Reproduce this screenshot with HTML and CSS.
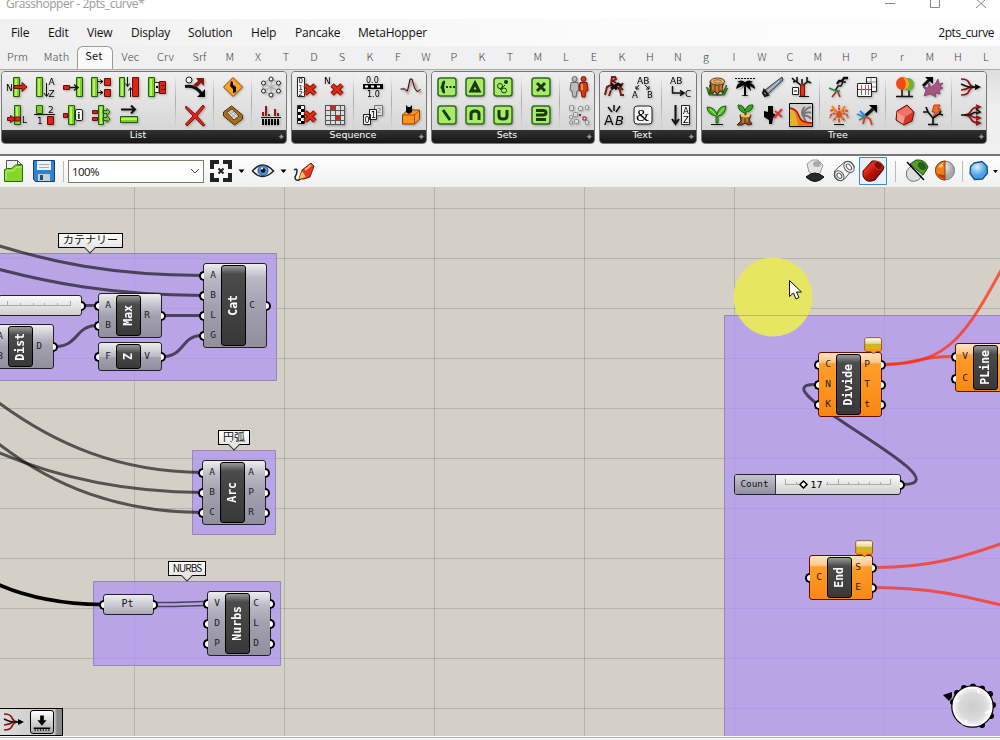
FILE: index.html
```html
<!DOCTYPE html>
<html lang="en">
<head>
<meta charset="utf-8">
<title>Grasshopper - 2pts_curve*</title>
<link rel="stylesheet" href="styles.css">
</head>
<body>
<div class="app">
<header class="titlebar">
  <span class="title">Grasshopper - 2pts_curve*</span>
  <svg class="winbtns" width="110" height="19" viewBox="885 0 110 19"><path d="M885 3.500h10M930.500-2V7.500h9V-2M976-1l10 9M986-1l-10 9"/></svg>
</header>
<nav class="menu"><span>File</span><span>Edit</span><span>View</span><span>Display</span><span>Solution</span><span>Help</span><span>Pancake</span><span>MetaHopper</span><span class="doc">2pts_curve</span></nav>
<nav class="tabs"><span>Prm</span><span>Math</span><span class="active">Set</span><span>Vec</span><span>Crv</span><span>Srf</span><span>M</span><span>X</span><span>T</span><span>D</span><span>S</span><span>K</span><span>F</span><span>W</span><span>P</span><span>K</span><span>T</span><span>M</span><span>L</span><span>E</span><span>K</span><span>H</span><span>N</span><span>g</span><span>I</span><span>W</span><span>C</span><span>M</span><span>H</span><span>P</span><span>r</span><span>M</span><span>H</span><span>L</span></nav>

<section class="ribbon">
  <div class="panel">
    <div class="groups">
      <div class="icons six">
        <svg viewBox="0 0 24 24"><path class="g" d="M8.500 2.500h6v19h-6z"/><path class="gh" d="M10 4h2v17h-2z"/><text x="1" y="16" font-size="9">N</text><path class="r" d="M9 10.500h8v-3l5 4.500-5 4.500v-3H9z"/></svg>
        <svg viewBox="0 0 24 24"><path class="g" d="M3.500 2.500h6v19h-6z"/><path class="gh" d="M5 4h2v17H5z"/><path class="k" d="M13.500 8v13M11 18l2.500 3.500L16 18"/><text x="15.500" y="10" font-size="9">A</text><text x="15.500" y="22" font-size="9">Z</text></svg>
        <svg viewBox="0 0 24 24"><path class="g" d="M15.500 2.500h6v19h-6z"/><path class="gh" d="M17 4h2v17h-2z"/><path class="r" d="M2.500 10.500h6v4h-6z"/><path class="k" stroke-width="1.500" d="M9 12.500h7M13 9.500l4 3-4 3"/></svg>
        <svg viewBox="0 0 24 24"><path class="g" d="M2.500 2.500h6v19h-6z"/><path class="gh" d="M4 4h2v17H4z"/><path class="r" d="M15.500 3.500h6v7h-6zM15.500 14.500h6v7h-6z"/><path class="k" d="M8 6.500h6M11 4.500l3 2-3 2M8 17.500h6M11 15.500l3 2-3 2"/></svg>
        <svg viewBox="0 0 24 24"><path class="g" d="M2.500 2.500h5v19h-5z"/><path class="gh" d="M4 4h2v17H4z"/><path class="r" d="M15.500 2.500h6v19h-6z"/><path class="k" d="M10.500 2v9M8.500 8.500l2 3 2-3M13.500 22v-9M11.500 15.500l2-3 2 3"/></svg>
        <svg viewBox="0 0 24 24"><path class="w" d="M9 7.500h5v10H9z"/><path class="g" d="M3.500 2.500h6v19h-6z"/><path class="gh" d="M5 4h2v17H5z"/><path class="r" d="M14.500 6.500h6v12h-6z"/><path d="M16 10h4v1h-4zM16 14h4v1h-4z" fill="#6d0c08"/><circle cx="12" cy="12" r="1.200"/></svg>
        <svg viewBox="0 0 24 24"><path class="g" d="M9.500 2.500h6v19h-6z"/><path class="gh" d="M11 4h2v10h-2z"/><path class="r" d="M2.500 14.500h3v-2l5 3.500-5 3.500v-2h-3zM9.500 14h6v4h-6z"/><text x="17" y="20" font-size="9">L</text></svg>
        <svg viewBox="0 0 24 24"><path class="g" d="M3.500 2.500h6v8h-6z"/><path class="r" d="M14.500 13.500h6v8h-6z"/><path class="k" d="M1 11.500h21"/><text x="15" y="10" font-size="9">2</text><text x="4" y="21" font-size="9">1</text></svg>
        <svg viewBox="0 0 24 24"><path class="r" d="M2.500 10.500h4v4h-4z"/><path class="g" d="M7.500 2.500h6v19h-6z"/><path class="gh" d="M9 4h2v17H9z"/><rect class="w" x="14.500" y="6.500" width="7" height="11" rx="1.500"/><text x="16.500" y="15.500" font-size="8" font-weight="bold">i</text></svg>
        <svg viewBox="0 0 24 24"><path class="g" d="M9.500 2.500h5v19h-5zM14 7.500h4v-2l3 3.500-3 3.500v-2h-4zM14 14.500h4v-2l3 3.500-3 3.500v-2h-4z"/><path class="r" d="M3.500 7.500h5v3h-5zM3.500 14.500h5v3h-5z"/><path class="gh" d="M11 4h2v17h-2z"/></svg>
        <svg viewBox="0 0 24 24"><path class="k2" d="M4 6.500h13M14 2.500l4 4-4 4"/><path class="g" d="M3.500 13.500h17v6h-17z"/><path class="gh" d="M4 15h16v2H4z"/></svg>
      </div>
      <div class="icons">
        <svg viewBox="0 0 24 24"><path class="k3" d="M2 11.500q11-2 17 8"/><path d="M14 22h8v-8z"/><path d="M10 10l5-4-2-3h8v8l-3-3-4 4z" fill="#8d1512"/><circle class="w" cx="6" cy="5" r="3"/></svg>
        <svg viewBox="0 0 24 24"><path d="M3 3l9 8 8-9 1.500 2-7.500 9 8 9-2 1-8-8-8 8-1.500-2 7.500-8-7.500-8z" fill="#e02415" stroke="#8a0d08"/></svg>
      </div>
      <div class="icons">
        <svg viewBox="0 0 24 24"><path d="M12 2.500l9.500 9.500-9.500 9.500L2.500 12z" fill="#ffa21f" stroke="#8b480a"/><path d="M10 6l2 1v3l3 2v5l-3 1v-4l-3-3z"/></svg>
        <svg viewBox="0 0 24 24"><path d="M2.500 9l8-6 11 9v4l-8 6-11-9z" fill="#a86e1b" stroke="#4b300a"/><path d="M6 9.500l5-3.500 7 7-5 4z" fill="#ddd" stroke="#554220"/><path d="M8 9l7 6M10 7.500l7 6M8 12l5-4M11 14l5-4" stroke="#888" stroke-width=".6"/></svg>
      </div>
      <div class="icons">
        <svg viewBox="0 0 24 24"><path d="M4 8l16 8M4 16l16-8M12 4v16M4 8v8M20 8v8M4 8l8-4 8 4M4 16l8 4 8-4" fill="none" stroke="#aaa"/><g class="w"><circle cx="12" cy="4" r="2"/><circle cx="4.500" cy="8" r="2"/><circle cx="19.500" cy="8" r="2"/><circle cx="4.500" cy="16" r="2"/><circle cx="19.500" cy="16" r="2"/><circle cx="12" cy="20" r="2"/></g></svg>
        <svg viewBox="0 0 24 24"><path d="M4 9v4M7 3v10M10 11v2M16 6v7M19 10v3" stroke="#8b1915" stroke-width="2"/><path class="k" d="M2 14.500h20"/><path d="M4 16v6M7 16v6M10 16v6M13 16v6M16 16v6M19 16v6" stroke="#000" stroke-width="2"/></svg>
      </div>
    </div>
    <div class="caption">List<i>✦</i></div>
  </div>

  <div class="panel">
    <div class="groups">
      <div class="icons two">
        <svg viewBox="0 0 24 24"><path class="w" d="M2.500 2.500h7v19h-7z"/><text x="3.500" y="8" font-size="7">0</text><text x="3.500" y="14.500" font-size="7">1</text><text x="3.500" y="21" font-size="7">2</text><path class="xo" d="M10 10l10 9M20 10l-10 9"/><path class="x" d="M10 10l10 9M20 10l-10 9"/></svg>
        <svg viewBox="0 0 24 24"><text x="1" y="9" font-size="9">N</text><path class="xo" d="M9 10l10 9M19 10l-10 9"/><path class="x" d="M9 10l10 9M19 10l-10 9"/></svg>
        <svg viewBox="0 0 24 24"><path class="w" d="M2.500 2.500h7v18h-7z"/><path d="M3 3h3v3H3zM6 6h3v3H6zM3 9h3v3H3zM6 12h3v3H6zM3 15h3v3H3zM6 18h3v3H6z"/><path class="xo" d="M10 9l10 9M20 9l-10 9"/><path class="x" d="M10 9l10 9M20 9l-10 9"/></svg>
        <svg viewBox="0 0 24 24"><path d="M2 2h20v19H2z" fill="#ddd"/><path d="M7 2h5v5H7zM12 12h5v5h-5z" fill="#d8280f"/><path d="M2.500 2v20M7.500 2v20M12.500 2v20M17.500 2v20M21.500 2v20M2 2.500h20M2 7.500h20M2 12.500h20M2 17.500h20M2 21.500h20" stroke="#555"/></svg>
      </div>
      <div class="icons">
        <svg viewBox="0 0 24 24"><text x="5" y="8" font-size="8">0.0</text><path d="M2 9h20v5H2z"/><path d="M4 10.500h3v2H4zM10 10.500h3v2h-3zM16 10.500h3v2h-3z" fill="#fff"/><text x="6" y="22" font-size="8">1.0</text></svg>
        <svg viewBox="0 0 24 24"><path fill="#ddd" stroke="#777" d="M13.500 2.500h8v10h-8z"/><path class="w" d="M8.500 6.500h7v10h-7zM2.500 11.500h7v10h-7z"/><text x="10" y="15" font-size="8">1</text><text x="3.500" y="20" font-size="8">0</text><text x="16" y="10" font-size="7" fill="#777">2</text></svg>
      </div>
      <div class="icons">
        <svg viewBox="0 0 24 24"><path fill="none" stroke="#e59a9a" stroke-width="2" d="M4 13l4 4 4-12 4 5 1 5 5 2"/><path class="k" d="M1.500 14h4l3 2 2.500-12h2l2.500 9 3 4 3-3"/></svg>
        <svg viewBox="0 0 24 24"><path d="M3.500 12l5-5h12v9l-5 5h-12z" fill="#ff9320" stroke="#8b3b05"/><path d="M15.500 21v-9l5-5M3.500 12h12" fill="none" stroke="#a94c0b"/><path d="M7 2l2 2h2l2-2v7l-3 2-3-2z"/></svg>
      </div>
    </div>
    <div class="caption">Sequence<i>✦</i></div>
  </div>

  <div class="panel">
    <div class="groups">
      <div class="icons three">
        <svg viewBox="0 0 24 24"><rect class="s" x="3" y="3" width="18" height="18" rx="2.500"/><path class="sd" stroke-width="2" d="M10 7q-2 0-2 3t-2 2q2 0 2 2 0 3 2 3"/><path class="sf" d="M11 11h2v2h-2zM14.500 11h2v2h-2zM18 11h2v2h-2z"/></svg>
        <svg viewBox="0 0 24 24"><rect class="s" x="3" y="3" width="18" height="18" rx="2.500"/><path class="sd" d="M12 8l4 8H8z"/></svg>
        <svg viewBox="0 0 24 24"><rect class="s" x="3" y="3" width="18" height="18" rx="2.500"/><g fill="none" stroke="#173b0c"><circle cx="9" cy="11" r="2.500"/><circle cx="13" cy="15.500" r="2.500"/><path d="M9 15l5-5"/></g><circle class="sf" cx="15" cy="7" r="2"/></svg>
        <svg viewBox="0 0 24 24"><rect class="s" x="3" y="3" width="18" height="18" rx="2.500"/><path class="sd" d="M8 7l7 10"/></svg>
        <svg viewBox="0 0 24 24"><rect class="s" x="3" y="3" width="18" height="18" rx="2.500"/><path class="sd" d="M8 17v-6q0-3 4-3t4 3v6"/></svg>
        <svg viewBox="0 0 24 24"><rect class="s" x="3" y="3" width="18" height="18" rx="2.500"/><path class="sd" d="M8 7v6q0 3 4 3t4-3V7"/></svg>
      </div>
      <div class="icons">
        <svg viewBox="0 0 24 24"><rect class="s" x="3" y="3" width="18" height="18" rx="2.500"/><path class="sd" d="M8 8l8 8M16 8l-8 8"/></svg>
        <svg viewBox="0 0 24 24"><rect class="s" x="3" y="3" width="18" height="18" rx="2.500"/><path class="sd" stroke-width="2.400" d="M7 7.500h7q3 0 3 2.300t-3 2.200H7M7 16.500h10"/></svg>
      </div>
      <div class="icons">
        <svg viewBox="0 0 24 24"><g fill="#bbb" stroke="#666"><circle cx="7.500" cy="4" r="2.500"/><path d="M4 7.500h7l1 8-2 .5-1 6H6l-1-6-2-1z"/></g><g fill="#d63a12" stroke="#7c1505"><circle cx="16.500" cy="4" r="2.500"/><path d="M13 7.500h7l1 8-2 .5-1 6h-3l-1-6-2-1z"/></g><path d="M14 9h2v6h-2z" fill="#ff9340"/></svg>
        <svg viewBox="0 0 24 24"><g fill="#ddd" stroke="#888"><rect x="2.500" y="2.500" width="4" height="5" rx="1"/><rect x="11.500" y="3.500" width="4" height="4" rx="1"/><rect x="18.500" y="2.500" width="3" height="4" rx="1"/><rect x="2.500" y="12.500" width="3" height="3" rx="1"/><rect x="2.500" y="18" width="3" height="3" rx="1"/><rect x="7.500" y="16.500" width="4" height="4" rx="1"/><rect x="6.500" y="9.500" width="4" height="4" rx="1"/><rect x="18.500" y="17.500" width="3" height="4" rx="1"/></g><path d="M12 11l2 2M14 11l-2 2M16 14h3v3h-3z" fill="#ddd" stroke="#9b1717"/></svg>
      </div>
    </div>
    <div class="caption">Sets<i>✦</i></div>
  </div>

  <div class="panel">
    <div class="groups">
      <div class="icons two">
        <svg viewBox="0 0 24 24"><path fill="none" stroke="#7a1b12" stroke-width="2" d="M8 9l1-7h3l1 2-3 2 3 2M8 10l-4 2-2 8M8 15l-2 6M14 12l3 3 1 5h3M20 8l-3 4 3 3"/><path class="k3" d="M8 9l6 5M8 14l7-5 4 2"/></svg>
        <svg viewBox="0 0 24 24"><text x="6" y="9" font-size="9">AB</text><text x="1" y="23" font-size="8.500">A</text><text x="16" y="23" font-size="8.500">B</text><path class="k" d="M8 10l-3 4M5 11v3h3M14 10l4 4M18 11v3h-3"/></svg>
        <svg viewBox="0 0 24 24"><path class="k" d="M11 2v6M5 4l4 5M17 3l-4 6" stroke-width="1.500"/><text x="1" y="22" font-size="14">A</text><text x="12" y="22" font-size="13" font-style="italic">B</text></svg>
        <svg viewBox="0 0 24 24"><rect class="w" x="3" y="3" width="18" height="18" rx="3"/><text x="5" y="18" font-size="17" class="serif">&amp;</text></svg>
      </div>
      <div class="icons">
        <svg viewBox="0 0 24 24"><text x="1" y="9" font-size="9">AB</text><text x="16" y="22" font-size="9">C</text><path class="k" d="M3.500 11v7h10M11 15.500l4 2.500-4 2.500" stroke-width="1.500"/></svg>
        <svg viewBox="0 0 24 24"><path class="k2" d="M6.500 2v18M3 16l3.500 5 3.500-5"/><path class="w" d="M12.500 2.500h8v19h-8z"/><text x="14" y="11" font-size="8.500">A</text><text x="14" y="20" font-size="8.500">Z</text></svg>
      </div>
    </div>
    <div class="caption">Text<i>✦</i></div>
  </div>

  <div class="panel">
    <div class="groups">
      <div class="icons four">
        <svg viewBox="0 0 24 24"><path d="M1.500 12l4 4-1-6 4 10h8l5-10-1 6 2-3-3 7H4z" fill="#2d9b18" stroke="#1b6610"/><path d="M5 6l1 9-2 3h4l2-2 2 4 3-4 4 2-2-4 2-8z" fill="#9b561d" stroke="#40220b"/><path d="M8 10v5M12 11v6M16 10v5" stroke="#e0a34e"/><ellipse cx="12.500" cy="6.500" rx="7" ry="3.500" fill="#e4bb72" stroke="#64391a"/><ellipse cx="12.500" cy="6.500" rx="4" ry="1.700" fill="none" stroke="#8f5d2e"/></svg>
        <svg viewBox="0 0 24 24"><path class="k" d="M2 3.500h20" stroke-dasharray="2 1"/><path d="M11 10L3 14q1-7 5-6l-4-1q4-3 8 0 4-3 8 0l-3 1q5 1 5 6l-5-3 1 5-5-5v9l3 1H8l3-1v-9l-4 5z"/></svg>
        <svg viewBox="0 0 24 24"><path d="M21 2l1 3L7 19l-3-4z" fill="#8d98a4" stroke="#39424b"/><path d="M18 6L7 16" stroke="#d6dee5"/><path class="k2" d="M3 15l4 5-3 1-2-3z"/></svg>
        <svg viewBox="0 0 24 24"><path class="k" stroke-width="1.600" d="M13 11L8 7V2M8 6L4 7M3 3l3 3M13 11l5-4V2M18 6l4 2M13 9V4"/><path d="M11.500 10h4v11h-4z" fill="#e13219" stroke="#761509"/><path class="w" d="M3.500 12.500h6v7h-6z"/><path class="k" d="M5 16h3M10 21.500h10"/></svg>
        <svg viewBox="0 0 24 24"><path d="M11 20v-7Q2 11 2 4q8 0 10 8Q13 3 21 3q-1 10-8 10v7z" fill="#4bb827" stroke="#195f12"/><path d="M5 6l6 6M19 5l-6 7" stroke="#afef87"/><path class="k" d="M6 21.500h12" stroke="#31591c"/></svg>
        <svg viewBox="0 0 24 24"><path d="M7 12l1 6-4 4h5l3-2 3 2 4-1-3-4 2-5z" fill="#8b4a18" stroke="#35200d"/><path d="M10 15v5M14 15v4" stroke="#e0a34e"/><ellipse cx="12.500" cy="12" rx="5" ry="2.500" fill="#edc46c"/><path d="M12 10Q5 8 5 2q6 0 7 6 2-7 8-6-1 7-7 7v3h-1z" fill="#38a51d" stroke="#145c0d"/></svg>
        <svg viewBox="0 0 24 24"><path d="M3 8l4 1V3h5v7l3 2-3 3-1 6H8v-4l-5-3z"/><path d="M13 15l8-9M14 8l7 6" stroke="#d7352b" stroke-width="2"/></svg>
        <svg class="framed" viewBox="0 0 24 24"><path d="M.5.5h23v23H.500z" fill="#cfcfcf" stroke="#000"/><path d="M13 13q3-8 9-9M14 12q4-4 8-2M15 13q5-1 7 3M13 11q0-5 3-7M14 13l3 6" stroke="#777" stroke-width="2" fill="none"/><path d="M1 5q7 1 9 8t13 7v3H1z" fill="#f4741d"/><path d="M1 6q6 1 8 17H1z" fill="#e4b428"/><path d="M1 5q7 1 9 8t13 7" fill="none" stroke="#a71009" stroke-width="1.500"/></svg>
      </div>
      <div class="icons two">
        <svg viewBox="0 0 24 24"><path class="k" stroke-width="2.300" d="M21 3h-4l-2 3h-3l-2 3"/><path class="k" stroke-width="1.500" d="M19 7h-3l-2 4h-3l-3 5"/><path d="M9 14l2 3 2 5M9 17l-4 5" stroke="#962a17" stroke-width="1.500" fill="none"/><path d="M2 13l7 3h4" stroke="#1a8a38" stroke-width="1.500" fill="none"/></svg>
        <svg viewBox="0 0 24 24"><path class="w" d="M11.500 2.500h10v14h-10z"/><path d="M12 7h9M12 12h9M16 3v13" stroke="#888"/><path class="w" d="M2.500 8.500h14v13h-14z"/><path d="M3 14.500h13" stroke="#c62b1b"/><path d="M6.500 10v10M10.500 10v10M13.500 10v10" stroke="#777"/></svg>
        <svg viewBox="0 0 24 24"><path fill="none" stroke="#e34d17" stroke-width="2" stroke-dasharray="3 .7" d="M12 12v8M12 12Q4 8 3 15M12 12q8-4 9 3M12 11Q8 5 3 8M12 11q2-5 9-3M12 11V2M11 12l-5 6M13 12l5 6"/><path d="M9 9L5 3M14 9l4-6" stroke="#ff7c12" stroke-width="2"/><path class="k" d="M7 21.500h10" stroke="#7f2511"/></svg>
        <svg viewBox="0 0 24 24"><path class="k3" d="M10 13l8-7"/><path d="M14 2h8v8z"/><g fill="none" stroke-width="1.800"><path d="M2 11l7 3M5 8l6 6" stroke="#2c86d8"/><path d="M4 17l6-3" stroke="#249b33"/><path d="M10 14l-2 7M11 14l4 2 2 6" stroke="#d63c25"/></g></svg>
      </div>
      <div class="icons two">
        <svg viewBox="0 0 24 24"><path class="k" stroke-width="1.500" d="M9 14v8M16 15v7M3 21.500h17"/><ellipse cx="15.500" cy="9.500" rx="5.500" ry="6.500" fill="#64b72b"/><ellipse cx="9.500" cy="8.500" rx="6.500" ry="6.500" fill="#ef4a16"/><path d="M10 2.500q5 6 1 12 6-1 5-7-1-4-6-5z" fill="#f8a323"/></svg>
        <svg viewBox="0 0 24 24"><path d="M3 21l2-6-3-3 5 1 1-5 2 4 4-3 3-5 1 5 4-1-3 4 3 1-4 2 1 4-5-1 1 4-6-3z" fill="#a4577f" stroke="#7b2f67" stroke-width=".7"/><path class="k3" d="M2 11l6-6"/><path d="M4 2h8v7z"/></svg>
        <svg viewBox="0 0 24 24"><path d="M14 2l7 7-2 9-8 4-8-5 1-9z" fill="#d53628" stroke="#6b0c09"/><path d="M14 3L4 9l8 5 8-5z" fill="#ee7466"/><path d="M4 9l8 5-2 7-6-4z" fill="#f39a8b"/></svg>
        <svg viewBox="0 0 24 24"><path class="k" stroke-width="1.700" d="M12 22v-7L7 9H2M7 9L5 4M12 15l6-4 4 1M18 11l2-3M7 21.500h10" stroke="#421713"/><path d="M13 2h6l-2 4h3l-8 8 2-5h-3z" fill="#f36a21" stroke="#c63b14"/></svg>
      </div>
      <div class="icons">
        <svg viewBox="0 0 24 24"><path class="b" d="M2 4q7 0 8 4 2 4 6 4M2 20q7 0 8-4 2-4 6-4M2 15q5 0 9-3"/><path class="k" stroke-width="1.600" d="M2 9q6 3 10 3h6"/><path d="M16 9l6 3-6 3z"/></svg>
        <svg viewBox="0 0 24 24"><path class="b" d="M20 4q-6 0-8 4t-7 4M20 20q-6 0-8-4t-7-4M20 15q-6 0-9-3M17 2l4 2-4 2M17 18l4 2-4 2M17 13l4 2-4 2"/><path class="k" stroke-width="1.600" d="M2 12h9q4-3 7-3M17 6l4 3-4 2"/></svg>
      </div>
    </div>
    <div class="caption">Tree<i>✦</i></div>
  </div>
</section>

<section class="toolbar">
  <svg class="tb left" width="64" height="31" viewBox="0 156 64 31">
    <path d="M6.500 160.500h11l4 4v10h-15z" fill="#eee" stroke="#555"/><path d="M17.500 160.500v4h4" fill="none" stroke="#555"/><path d="M4.500 181.500v-12l3-1h4l4-3.500h7v16.500z" fill="#86d52b" stroke="#2b6a0b"/><path d="M6 180v-9h7l4-4h5" fill="none" stroke="#c6f47d"/>
    <path d="M33.500 160.500h21v21h-19l-2-2z" fill="#2e82cf" stroke="#123d72"/><path d="M37 161h14v9H37z" fill="#eef2f5"/><path d="M39 164.500h10M39 167.500h10" stroke="#aaa"/><path d="M38 174h12v7H38z" fill="#c9ced3"/><path d="M40 175h3v5h-3z" fill="#174d92"/><path d="M63.500 161v21" stroke="#bbb"/>
  </svg>
  <div class="zoombox"><span>100%</span><svg width="10" height="6" viewBox="0 0 10 6"><path d="M1 1l4 4 4-4" fill="none" stroke="#444"/></svg></div>
  <svg class="tb" width="112" height="31" viewBox="206 156 112 31">
    <path d="M210 160h9v4h-5v5h-4zM223 160h9v9h-4v-5h-5zM210 173h4v5h5v4h-9zM228 173h4v9h-9v-4h5z" fill="#222"/><path d="M218.500 168.500l5 5M223.500 168.500l-5 5" stroke="#222" stroke-width="2"/><path d="M238.500 169.500h6l-3 3.500zM280.500 169.500h6l-3 3.500z"/>
    <path d="M252.500 171q10-12 21 0-11 11-21 0z" fill="#f4f4f4" stroke="#222" stroke-width="1.500"/><circle cx="263" cy="170.500" r="5" fill="#4a94de" stroke="#204e82"/><circle cx="263" cy="170.500" r="2.300"/><circle cx="262" cy="168.500" r="1" fill="#fff"/>
    <path d="M294 170q3-2 3 1 0 3-2 6 0 4 4 3l3-3" fill="none" stroke="#222" stroke-width="1.500"/><path d="M299 179l3-9 9-7 3 3-4 11-6 2z" fill="#e13b1c" stroke="#7b190c"/><path d="M299 179l3-8 4 6z" fill="#f5c36a"/><path d="M305 170l6-5" stroke="#ffab92" stroke-width="2"/>
  </svg>
  <svg class="tb right" width="200" height="31" viewBox="800 156 200 31">
    <defs><linearGradient id="red" x2="1" y2="1"><stop stop-color="#9c0d05"/><stop offset=".3" stop-color="#e8301d"/><stop offset=".5" stop-color="#b81209"/><stop offset="1" stop-color="#650201"/></linearGradient><radialGradient id="ball" cx=".4" cy=".3"><stop stop-color="#fff"/><stop offset="1" stop-color="#aaa"/></radialGradient><radialGradient id="blue" cx=".4" cy=".3"><stop stop-color="#d7f3ff"/><stop offset="1" stop-color="#4b9fe3"/></radialGradient></defs>
    <path d="M807 164l5-4h6l5 5-3 8-5 3-6-4z" fill="#e4e4e4" stroke="#999"/><ellipse cx="817" cy="164" rx="4" ry="3" fill="#aaa"/><path d="M806 177q9-8 18 0-9 9-18 0z" fill="#2a2a2a" stroke="#111"/>
    <g fill="#fafafa" stroke="#555"><path d="M834.500 171l10-9q7-3 10 5l-10 12q-7 4-10-2z"/><ellipse cx="849" cy="167" rx="4.500" ry="6" transform="rotate(-40 849 167)"/><ellipse cx="849" cy="167" rx="2" ry="3.500" transform="rotate(-40 849 167)"/><ellipse cx="839.500" cy="176" rx="4" ry="5.500" transform="rotate(-40 839 176)"/><ellipse cx="839.500" cy="176" rx="2" ry="3" transform="rotate(-40 839 176)"/></g>
    <path d="M859.500 157.500h27v27h-27z" fill="#e9f2fb" stroke="#3889d5"/><path d="M863 171l9-10q8-1 12 6l-1 3-8 10q-9 4-12-4z" fill="url(#red)" stroke="#540703"/><ellipse cx="878.500" cy="166" rx="3.500" ry="4.500" transform="rotate(-45 878 166)" fill="#7f0f08" stroke="#b93a28"/>
    <path d="M895.500 161v21M962.500 161v21" stroke="#bbb"/>
    <path d="M906.500 171l9-10q8-1 12 6l-1 3-8 10q-9 4-12-4z" fill="#ddd" stroke="#777"/><path d="M910 164l6-4q9-1 12 7l-5 8z" fill="#4da329" stroke="#1c540f"/><ellipse cx="922" cy="166" rx="3.500" ry="4.500" transform="rotate(-45 922 166)" fill="#255f14"/><path d="M907 162l17 18" stroke="#000" stroke-width="1.500"/>
    <circle cx="945" cy="170.500" r="9.500" fill="url(#ball)" stroke="#777"/><path d="M945 161a9.500 9.500 0 0 0 0 19z" fill="#ef7d18" stroke="#953c06"/><path d="M943 163a8 8 0 0 0-5 5l5-1z" fill="#ffcf7e"/><path d="M937 174q3 4 8 5v-4z" fill="#bf3809"/>
    <path d="M974 163l8-1.500 5 4.500.500 7-5 6-8 .5-4.500-6 .5-7z" fill="url(#blue)" stroke="#154e8c" stroke-width="1.300"/><path d="M993 170h5l-2.500 3z"/>
  </svg>
</section>

<main class="canvas">
  <svg class="layer" width="1000" height="549" viewBox="0 187 1000 549">
    <path class="grid" d="M134.500 187v549M284.500 187v549M434.500 187v549M584.500 187v549M734.500 187v549M884.500 187v549M0 208.500h1000M0 258.500h1000M0 308.500h1000M0 358.500h1000M0 408.500h1000M0 458.500h1000M0 508.500h1000M0 558.500h1000M0 608.500h1000M0 658.500h1000M0 708.500h1000"/>
    <g class="zone"><path d="M-1.500 253.500h278v127h-278zM192.500 450.500h83v84h-83zM93.500 581.500h187v84h-187zM724.500 315.500h280v430h-280z"/></g>
    <g class="wire">
      <path d="M-10 243C50 262 110 275 203 275.500"/><path d="M-10 267C50 283 110 295 203 295.500"/><path d="M164 315.500h39"/><path d="M164 356.500C184 356 182 336 201 335.500"/><path d="M84 305.500h14"/><path d="M56 346.500C78 346 76 326 96 325.500"/>
      <path d="M-5 400C55 445 120 472 202 472.500"/><path d="M-5 451C50 475 120 492 202 492.500"/><path d="M-5 441C55 488 120 512 202 512.500"/>
      <path d="M903 484.500C971 484 753 384 815 384.500" class="loop"/>
    </g>
    <path class="wire heavy" d="M-5 583C25 597 60 604 102 604.500"/>
    <path class="wire double" d="M156 602.500h18l30-1M156 606.500h18l30-1"/>
    <g class="wire hot"><path d="M886 364.500C950 364 967 332 1003 267"/><path d="M886 364.500C920 363 920 356 953 356.500"/><path d="M876 567.500C930 567 960 558 1003 543"/><path d="M876 587.500C930 588 960 595 1003 605.500"/></g>
  </svg>

  <div class="tag t-cat">カテナリー</div>
  <div class="tag t-arc">円弧</div>
  <div class="tag t-nurbs">NURBS</div>

  <div class="node cat"><div class="in"><b>A</b><b>B</b><b>L</b><b>G</b></div><div class="core"><span>Cat</span></div><div class="out"><b>C</b></div></div>
  <div class="node max"><div class="in"><b>A</b><b>B</b></div><div class="core"><span>Max</span></div><div class="out"><b>R</b></div></div>
  <div class="node unitz"><div class="in"><b>F</b></div><div class="core"><span>Z</span></div><div class="out"><b>V</b></div></div>
  <div class="node dist"><div class="in"><b>A</b><b>B</b></div><div class="core"><span>Dist</span></div><div class="out"><b>D</b></div></div>
  <div class="node arc"><div class="in"><b>A</b><b>B</b><b>C</b></div><div class="core"><span>Arc</span></div><div class="out"><b>A</b><b>P</b><b>R</b></div></div>
  <div class="node nurbs"><div class="in"><b>V</b><b>D</b><b>P</b></div><div class="core"><span>Nurbs</span></div><div class="out"><b>C</b><b>L</b><b>D</b></div></div>
  <div class="node hot divide"><div class="in"><b>C</b><b>N</b><b>K</b></div><div class="core"><span>Divide</span></div><div class="out"><b>P</b><b>T</b><b>t</b></div></div>
  <div class="node hot pline"><div class="in"><b>V</b><b>C</b></div><div class="core"><span>PLine</span></div><div class="out"></div></div>
  <div class="node hot end"><div class="in"><b>C</b></div><div class="core"><span>End</span></div><div class="out"><b>S</b><b>E</b></div></div>

  <div class="param pt">Pt</div>
  <div class="slider sl-left"><svg width="82" height="19" viewBox="0 0 82 19"><path class="tick" d="M0 9.500h71M8.500 5v5M21.500 7v3M34.500 7v3M45.500 7v3M58.500 7v3M71.500 5v5"/></svg></div>
  <div class="slider sl-count"><span class="name">Count</span><svg width="124" height="19" viewBox="0 0 124 19"><path class="tick" d="M9.500 9.500H24M50 9.500h65M9.500 4v6M20.500 7v3M51.500 7v3M62.500 4v6M72.500 7v3M82.500 7v3M93.500 7v3M104.500 7v3M114.500 4v6"/><path d="M27.500 6l3.500 3.500-3.500 3.500L24 9.500z" fill="#fff" stroke="#000" stroke-width="1.500"/><text x="34.500" y="12.500" font-size="9.500">17</text></svg></div>

  <svg class="balloon b-divide" viewBox="0 0 19 18"><use href="#warn"/></svg>
  <svg class="balloon b-end" viewBox="0 0 19 18"><defs><linearGradient id="wg" x2="0" y2="1"><stop stop-color="#fff"/><stop offset=".35" stop-color="#e5d694"/><stop offset=".4" stop-color="#ceb326"/><stop offset=".65" stop-color="#ddb51e"/><stop offset=".7" stop-color="#ff9620"/><stop offset="1" stop-color="#ff9620"/></linearGradient><g id="warn"><path d="M2 .7h14l1.500 1.500v11L16 14.500h-4l-2.500 2.500L7 14.500H2L.700 13V2z" fill="url(#wg)" stroke="#a35817"/></g></defs><use href="#warn"/></svg>

  <svg class="spot" width="80" height="80" viewBox="0 0 80 80"><circle cx="40" cy="40" r="39.500" fill="#e6e662"/><path d="M5 58.500h70" stroke="#c5b750"/><path d="M56.500 23.500v16l4-3.500 2.500 6 3-1.500-2.500-5.500h5z" fill="#fff" stroke="#111"/></svg>

  <div class="widget">
    <svg width="24" height="24" viewBox="0 0 24 24"><path class="b" d="M4 4q7 0 8 4 2 4 6 4M4 20q7 0 8-4 2-4 6-4M4 15q5 0 9-3"/><path class="k" stroke-width="1.600" d="M4 9q6 3 10 3h6"/><path d="M18 9l6 3-6 3z"/></svg>
    <svg class="pressed" width="24" height="24" viewBox="0 0 24 24"><path d="M10 5h4v5h3l-5 6-5-6h3z"/><path d="M3 18h18v1.500H3z"/><path d="M4.500 19v3M7.500 19v3M10.500 19v3M13.500 19v3M16.500 19v3M19.500 19v3" stroke="#000"/></svg>
  </div>

  <svg class="knob" width="56" height="50" viewBox="944 681 56 50"><defs><radialGradient id="kg" cx=".5" cy=".5"><stop stop-color="#cdcdcd"/><stop offset=".7" stop-color="#dadada"/><stop offset="1" stop-color="#f4f4f4"/></radialGradient></defs><g><circle cx="953" cy="702" r="3"/><circle cx="957" cy="693" r="3"/><circle cx="964" cy="688" r="3"/><circle cx="973" cy="686.500" r="3"/><circle cx="982" cy="688.500" r="3"/><circle cx="990" cy="694" r="3"/><circle cx="993" cy="705" r="3"/><circle cx="991" cy="716" r="3"/><circle cx="982" cy="725" r="3"/><circle cx="972.500" cy="706.500" r="21.300"/></g><path d="M943 695l9-3v5l-3 4z"/><circle cx="972.500" cy="706.500" r="19" fill="url(#kg)" stroke="#fff" stroke-width="2.200"/><path d="M976 687l6 2-4 5zM954 698l6 3-5 2zM991 709l-7 4 7 2zM961 724l6-5 1 7z" fill="#fff"/></svg>
</main>
<footer class="edge"></footer>
</div>
</body>
</html>
```
FILE: styles.css
```css
*, *::before, *::after { box-sizing: border-box; }
body { margin: 0; background: #f0f0f0; }
.app { width: 1000px; height: 740px; overflow: hidden; display: flex; flex-direction: column; font-family: "Open Sans", sans-serif; font-size: 12px; color: #111; }
svg { display: block; flex: none; }
svg text { font-family: "DejaVu Sans", sans-serif; }
svg text.serif { font-family: "Liberation Serif", serif; }

.titlebar { height: 19px; flex: none; background: #fff; display: flex; justify-content: space-between; padding: 0 5px 0 6px; color: #999; }
.title { line-height: 16px; margin-top: -4px; letter-spacing: -.45px; }
.winbtns { fill: none; stroke: #888; margin-left: auto; }

.menu { height: 27px; flex: none; background: linear-gradient(90deg, #f0f0f0, #fbfbfb 60%, #fdfdfd); display: grid; grid-template-columns: 37px 39px 44px 57px 63px 44px 63px 1fr auto; padding: 0 6px 0 11px; line-height: 28px; letter-spacing: -.2px; }
.doc { letter-spacing: -.45px; }

.tabs { height: 24px; flex: none; display: grid; grid-template-columns: 35px 43px 35px 35px 35px 33px repeat(28, 28px); font: 300 11px/21px "Noto Sans CJK JP", sans-serif; color: #444; text-align: center; border-bottom: 1px solid #aaa; overflow: hidden; letter-spacing: .2px; }
.tabs .active { background: #fafafa; color: #111; border: 1px solid #999; border-bottom: 0; border-radius: 6px 6px 0 0; line-height: 16px; margin-left: -1px; padding-right: 2px; font-weight: 400; }

.ribbon { height: 84px; flex: none; display: flex; gap: 4px; padding: 1px 0 0 1px; align-items: flex-start; background: linear-gradient(#dedede, #efefef 45%, #f0f0f0); }
.panel { border: 1px solid #777; border-radius: 4px; background: #ddd; height: 73px; display: flex; flex-direction: column; overflow: hidden; }
.groups { flex: 1; padding: 1px; display: flex; gap: 10px; background: linear-gradient(#efefef, #d6d6d6); }
.icons { display: grid; grid-template: repeat(2, 28px) / 28px; position: relative; }
.icons.two { grid-template-columns: repeat(2, 28px); }
.icons.three { grid-template-columns: repeat(3, 28px); }
.icons.four { grid-template-columns: repeat(4, 28px); }
.icons.six { grid-template-columns: repeat(6, 28px); }
.icons svg { width: 24px; height: 24px; margin: 2px; filter: drop-shadow(1px 1px 1px #0004); }
.icons + .icons::before { content: ""; position: absolute; left: -6px; top: 2px; bottom: 0; width: 1px; background: linear-gradient(#ccc0, #aaa 50%, #ccc0); }
.caption { height: 13px; flex: none; background: linear-gradient(#333, #151515); color: #fff; text-align: center; font: 9.5px/10px "DejaVu Sans", sans-serif; position: relative; padding-left: 1px; padding-right: 13px; }
.caption i { position: absolute; right: 1px; top: 2px; font-style: normal; font-size: 9px; color: #999; }

.g { fill: #80cf26; stroke: #1e5e0d; }
.gh { fill: #b7f063; }
.r { fill: #dd2416; stroke: #6d0c08; }
.w { fill: #f5f5f5; stroke: #222; }
.k, .k2, .k3 { fill: none; stroke: #111; }
.k2 { stroke-width: 2; }
.k3 { stroke-width: 3; }
.x { stroke: #e02c14; stroke-width: 3; }
.xo { stroke: #7c1409; stroke-width: 5; }
.b { fill: none; stroke: #8f1713; stroke-width: 1.7; }
.s { fill: #a9ea69; stroke: #2c6b1a; stroke-width: 1.5; }
.sd { fill: none; stroke: #173b0c; stroke-width: 3; }
.sf { fill: #173b0c; }

.toolbar { height: 33px; flex: none; border-top: 2px solid #777; background: linear-gradient(#fff, #f0f0f0); display: flex; align-items: flex-start; }
.zoombox { margin: 4px 2px 0 4px; width: 136px; height: 23px; border: 1px solid #7a8070; background: #fff; display: flex; align-items: center; justify-content: space-between; padding: 0 3px 1px; font: 11.5px "Open Sans", sans-serif; letter-spacing: -.6px; }
.toolbar .right { margin-left: auto; }

.canvas { height: 549px; flex: none; position: relative; overflow: hidden; background: #d4d0c8; }
.layer { position: absolute; inset: 0; }
.grid { stroke: #00001e; stroke-opacity: .14; }
.zone { fill: #b8a0ea; fill-opacity: .78; stroke: #9688b2; }
.zone path { fill: #b297f1; }
.wire, .wire path { fill: none; stroke: #000; stroke-opacity: .6; stroke-width: 3; }
.wire.heavy { stroke-width: 3.5; stroke-opacity: 1; }
.wire.double { stroke-width: 1.5; }
.wire.hot path { stroke: #ff2c0c; stroke-opacity: .72; }

.node { position: absolute; width: 64px; height: 65px; border: 1px solid #222; border-radius: 3px; background: linear-gradient(#eee, #b9b8c4 14px, #a3a1b0 50%, #918f9e); display: flex; font: 10px/20px "DejaVu Sans Mono", monospace; color: #222; }
.in, .out { display: flex; flex-direction: column; justify-content: space-around; padding: 1px 0 2px; position: relative; text-align: center; }
.in { width: 17px; padding-left: 1px; }
.out { width: 20px; padding-right: 8px; }
.node b { font-weight: normal; height: 20px; display: block; font-size: 9.5px; }
.in b::before, .out b::after, .param::before, .param::after, .slider::after { content: ""; position: absolute; width: 5px; height: 10px; margin-top: 6px; border: 2px solid #000; background: #fff; }
.in b::before { left: -5px; border-right: 0; border-radius: 5px 0 0 5px; }
.out b::after { right: -5px; border-left: 0; border-radius: 0 5px 5px 0; }
.core { width: 25px; margin: 1px 0; border: 1px solid #000; border-radius: 3px; background: linear-gradient(#999, #4b4b4b 8px, #383838); display: flex; align-items: center; justify-content: center; }
.core span { writing-mode: vertical-rl; transform: rotate(180deg); color: #fff; font-weight: bold; font-size: 11.5px; line-height: 23px; }
.node.hot { border-color: #6b0900; background: linear-gradient(#ffe5c4, #ffc88a 9px, #ff9d2c 11px, #f98712); }

.cat { left: 203px; top: 76px; height: 85px; }
.max { left: 98px; top: 106px; height: 45px; }
.unitz { left: 98px; top: 155px; height: 29px; }
.dist { left: -10px; top: 137px; height: 45px; }
.arc { left: 202px; top: 273px; }
.nurbs { left: 207px; top: 404px; }
.divide { left: 818px; top: 165px; }
.pline { left: 955px; top: 156px; height: 49px; }
.end { left: 809px; top: 368px; height: 45px; }

.param, .slider { position: absolute; height: 21px; border: 1px solid #222; border-radius: 3px; font: 10px/18px "DejaVu Sans Mono", monospace; }
.param { width: 51px; background: linear-gradient(#eee, #aaa9b7); text-align: center; padding-right: 2px; }
.param::before, .param::after, .slider::after { top: 5px; margin-top: 0; }
.param::before { left: -5px; border-right: 0; border-radius: 5px 0 0 5px; }
.param::after, .slider::after { right: -5px; border-left: 0; border-radius: 0 5px 5px 0; }
.pt { left: 103px; top: 407px; }
.slider { display: flex; background: linear-gradient(#fafafa, #cfcfcf); }
.sl-left { left: -2px; top: 108px; width: 84px; }
.sl-count { left: 734px; top: 287px; width: 167px; }
.name { width: 41px; flex: none; border-right: 1px solid #333; background: linear-gradient(#c5c3d0, #918f9e); border-radius: 2px 0 0 2px; text-align: center; font-size: 9.3px; padding-right: 1px; }
.tick { fill: none; stroke: #aaa; }

.tag { position: absolute; height: 15px; border: 1px solid #000; background: linear-gradient(#fff, #e6e6e6); text-align: center; font: 10px/11px "Noto Sans CJK JP", sans-serif; white-space: nowrap; }
.tag::after { content: ""; position: absolute; left: 50%; bottom: -4.5px; width: 8px; height: 8px; margin-left: -4.500px; background: #e6e6e6; border: solid #333; border-width: 0 1px 1px 0; transform: rotate(45deg); }
.t-cat { left: 58px; top: 46px; width: 65px; font-size: 11px; }
.t-arc { left: 218px; top: 243px; width: 32px; font-size: 11px; }
.t-nurbs { left: 168px; top: 374px; width: 38px; letter-spacing: -.9px; }

.balloon { position: absolute; width: 19px; height: 18px; }
.b-divide { left: 864px; top: 150px; }
.b-end { left: 855px; top: 353px; }
.spot { position: absolute; left: 733px; top: 70px; }
.widget { position: absolute; left: -1px; top: 521px; width: 64px; height: 28px; border: 1px solid #000; background: linear-gradient(90deg, #ddd, #c5c5c5 88%, #888 92%); display: flex; align-items: center; gap: 6px; }
.pressed { border: 1px solid #000; border-radius: 3px; background: linear-gradient(#fff, #aaa); }
.knob { position: absolute; left: 944px; top: 494px; overflow: visible; }
.edge { flex: 1; background: #f0f0f0; border-top: 1px solid #fff; box-shadow: inset 0 1px #aaa, inset 0 2px #fff; }
```
